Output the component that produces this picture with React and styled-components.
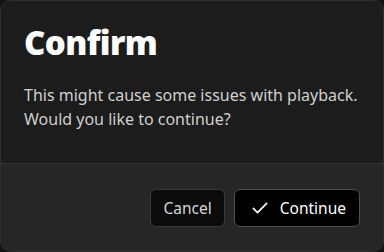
import React from 'react';
import styled, { createGlobalStyle } from 'styled-components';

const GlobalStyle = createGlobalStyle`
  html, body {
    margin: 0;
    padding: 0;
    background: #111111;
  }
  * {
    box-sizing: border-box;
  }
`;

const Dialog = styled.div`
  width: 384px;
  height: 252px;
  display: flex;
  flex-direction: column;
  background: #1c1c1c;
  border: 1px solid #2e2e2e;
  border-radius: 10px;
  overflow: hidden;
  font-family: 'Noto Sans', 'Open Sans', sans-serif;
`;

const Body = styled.div`
  flex: 1;
  padding: 21px 23px 0;
`;

const Title = styled.h2`
  margin: 0;
  font-family: 'Open Sans', sans-serif;
  font-weight: 800;
  font-size: 33px;
  line-height: 42px;
  color: #ffffff;
  letter-spacing: -0.6px;
`;

const Message = styled.p`
  margin: 19px 0 0;
  font-size: 16px;
  line-height: 24px;
  color: #cfcfcf;
`;

const Footer = styled.div`
  height: 88px;
  display: flex;
  justify-content: flex-end;
  align-items: center;
  gap: 9px;
  padding: 0 23px 0;
  background: #262626;
  border-top: 1px solid #333333;
`;

const Button = styled.button`
  height: 38px;
  display: flex;
  align-items: center;
  gap: 10px;
  padding: 0 ${(p) => (p.$primary ? '13px' : '12px')} 0 ${(p) => (p.$primary ? '15px' : '12px')};
  background: ${(p) => (p.$primary ? '#000000' : '#0b0b0b')};
  border: 1px solid ${(p) => (p.$primary ? '#4f4f4f' : '#3a3a3a')};
  border-radius: 6px;
  color: ${(p) => (p.$primary ? '#ffffff' : '#d6d6d6')};
  font-family: 'Noto Sans', sans-serif;
  font-size: 15.5px;
`;

const Check = () => (
  <svg width="20" height="20" viewBox="0 0 24 24" fill="none" stroke="#ffffff" strokeWidth="2" strokeLinecap="round" strokeLinejoin="round">
    <path d="M4 12.5l5 5L20 6.5" />
  </svg>
);

export default function App() {
  return (
    <>
      <GlobalStyle />
      <Dialog>
        <Body>
          <Title>Confirm</Title>
          <Message>
            This might cause some issues with playback.
            <br />
            Would you like to continue?
          </Message>
        </Body>
        <Footer>
          <Button>Cancel</Button>
          <Button $primary>
            <Check />
            Continue
          </Button>
        </Footer>
      </Dialog>
    </>
  );
}
